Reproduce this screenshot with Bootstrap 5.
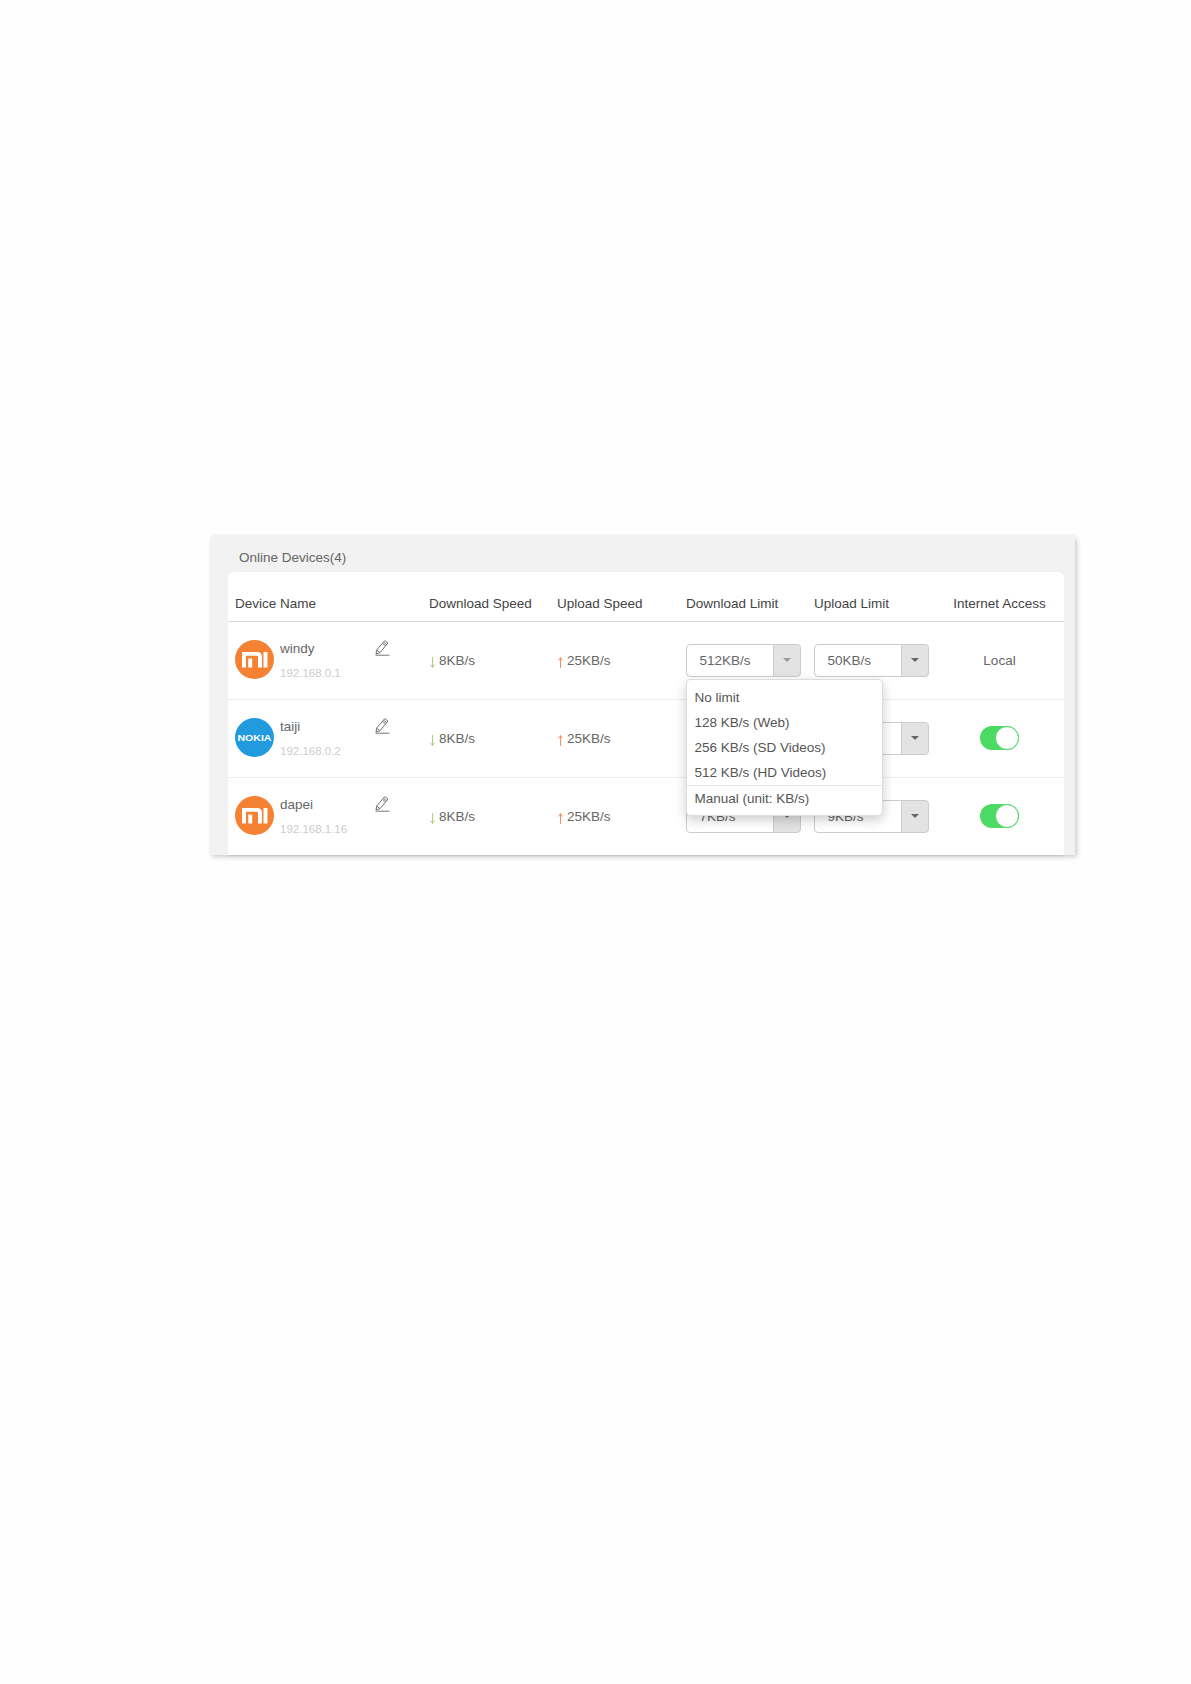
<!DOCTYPE html>
<html lang="en">
<head>
<meta charset="utf-8">
<title>Online Devices</title>
<link href="https://cdn.jsdelivr.net/npm/bootstrap@5.3.0/dist/css/bootstrap.min.css" rel="stylesheet">
<style>
body{background:#fefefe;padding:535px 116px 0 210px;font-family:"Liberation Sans",Arial,sans-serif;font-size:13.5px;color:#666;min-height:1684px}
.dev-panel{background:#f2f2f2;height:320px;padding:0 11px 0 18px;border-radius:5px 5px 0 0;box-shadow:2px 2px 5px rgba(0,0,0,.2)}
.dev-title{height:37px;padding:15px 0 0 11px;line-height:16px;color:#666;font-size:13.5px}
.dev-body{background:#fff;height:283px;border-radius:6px 6px 0 0;box-shadow:0 2px 2px -1px rgba(0,0,0,.12)}
.dev-table{table-layout:fixed;margin:0;width:836px;--bs-table-color:#666;--bs-table-bg:transparent}
.dev-table th{height:49px;padding:14px 7px 0;font-weight:400;color:#444;border-bottom:1px solid #d9d9d9;line-height:34px;font-size:13.5px;white-space:nowrap}
.dev-table td{height:78px;padding:0 7px;vertical-align:middle;border-bottom:1px solid #ececec}
.dev-table tr:last-child td{border-bottom:0}
.c-name{width:194px}
.c-dl,.c-lim,.c-lim2{width:128px}
.c-ul{width:129px}
.c-net{width:129px;text-align:center}
.dev-table th.c-net{padding:14px 0 0;text-align:center}
.dev-table td.c-speed,.dev-table td.c-local{padding-top:2px}
.dev-row{margin-bottom:1px}
.dev-avatar{width:39px;height:39px;flex:none;display:block}
.dev-info{width:94px;margin:2px 0 0 6px}
.dev-name{line-height:16px;color:#666}
.dev-ip{line-height:14px;font-size:11.5px;color:#ccc;margin-top:9px}
.dev-edit{margin:-24px 0 0 -1px;flex:none;display:block}
.speed-arrow{margin:0 4px 0 1px;vertical-align:-3px}
.sel-box{width:115px;height:33px;flex-wrap:nowrap}
.sel-box .form-control{font-size:13.5px;color:#666;padding:0 0 0 12.5px;line-height:31px;height:33px;border-color:#ccc;border-radius:4px 0 0 4px;background:#fff}
.sel-box .input-group-text{width:28px;padding:0;justify-content:center;background:#e3e3e3;border-color:#ccc;border-radius:0 4px 4px 0;height:33px}
.sel-caret{width:0;height:0;border-left:4px solid transparent;border-right:4px solid transparent;border-top:4px solid #666;display:block}
.sel-caret-dim{border-top-color:#999}
.sel-wrap{position:relative}
.sel-menu{--bs-dropdown-min-width:0;top:35px;left:0;width:197px;height:137px;padding:5px 0 0;border:1px solid #ddd;border-radius:4px;box-shadow:0 4px 12px rgba(0,0,0,.2);font-size:13.5px;z-index:5}
.sel-menu .dropdown-item{padding:0 7.5px;height:25px;line-height:25px;color:#555}
.sel-menu .dropdown-divider{margin:0;border-color:#e5e5e5;opacity:1}
.sel-menu .sel-manual{height:26px;line-height:26px}
.net-toggle{width:39px;height:24px;background:#4cd964;border-radius:12px;position:relative;display:inline-block;vertical-align:middle}
.net-knob{position:absolute;right:0;top:0;width:24px;height:24px;border-radius:50%;background:#fff;border:1px solid #4cd964}
</style>
</head>
<body>
<svg width="0" height="0" class="position-absolute">
  <defs>
    <symbol id="ico-mi" viewBox="0 0 39 39">
      <circle cx="19.5" cy="19.5" r="19.5" fill="#f58233"/>
      <path d="M7 12h15.500a4.500 4.500 0 0 1 4.500 4.500v11h-4V17a1.200 1.200 0 0 0-1.200-1.200H11v11.700H7zM13.200 18.500h4v9h-4zM28.500 12h4v15.500h-4z" fill="#fff"/>
    </symbol>
    <symbol id="ico-pen" viewBox="0 0 16 16">
      <path d="M11.200.7l3.300 2.300-8 9.700-4 1.300.6-3.900zM10 2.300l3.300 2.400M9 3.500l3.300 2.400M3.300 10.200l3.100 2.400M2.700 12.700l1 .8" fill="none" stroke="#666" stroke-width=".9" stroke-linejoin="round"/>
      <path d="M2 15.200H16" stroke="#666" stroke-width=".9"/>
    </symbol>
    <symbol id="ico-down" viewBox="0 0 5 11">
      <path d="M2.500 0v10M.4 7.500l2.100 3 2.100-3" fill="none" stroke="#a6c96a" stroke-width=".9"/>
    </symbol>
    <symbol id="ico-up" viewBox="0 0 5 11">
      <path d="M2.500 11V1M.4 3.500l2.100-3 2.100 3" fill="none" stroke="#f0874a" stroke-width=".9"/>
    </symbol>
  </defs>
</svg>
<div class="dev-panel">
  <div class="dev-title">Online Devices(4)</div>
  <div class="dev-body">
    <table class="table dev-table">
      <thead>
        <tr>
          <th class="c-name">Device Name</th>
          <th class="c-dl">Download Speed</th>
          <th class="c-ul">Upload Speed</th>
          <th class="c-lim">Download Limit</th>
          <th class="c-lim2">Upload Limit</th>
          <th class="c-net">Internet Access</th>
        </tr>
      </thead>
      <tbody>
        <tr>
          <td>
            <div class="d-flex align-items-center dev-row">
              <svg class="dev-avatar"><use href="#ico-mi"/></svg>
              <div class="dev-info"><div class="dev-name">windy</div><div class="dev-ip">192.168.0.1</div></div>
              <svg class="dev-edit" width="17" height="16"><use href="#ico-pen"/></svg>
            </div>
          </td>
          <td class="c-speed"><svg class="speed-arrow" width="5" height="11"><use href="#ico-down"/></svg>8KB/s</td>
          <td class="c-speed"><svg class="speed-arrow" width="5" height="11"><use href="#ico-up"/></svg>25KB/s</td>
          <td>
            <div class="sel-wrap">
              <div class="input-group sel-box"><span class="form-control">512KB/s</span><span class="input-group-text"><i class="sel-caret sel-caret-dim"></i></span></div>
              <div class="dropdown-menu d-block sel-menu">
                <a class="dropdown-item" href="#">No limit</a>
                <a class="dropdown-item" href="#">128 KB/s (Web)</a>
                <a class="dropdown-item" href="#">256 KB/s (SD Videos)</a>
                <a class="dropdown-item" href="#">512 KB/s (HD Videos)</a>
                <hr class="dropdown-divider">
                <a class="dropdown-item sel-manual" href="#">Manual (unit: KB/s)</a>
              </div>
            </div>
          </td>
          <td><div class="input-group sel-box"><span class="form-control">50KB/s</span><span class="input-group-text"><i class="sel-caret"></i></span></div></td>
          <td class="c-net c-local">Local</td>
        </tr>
        <tr>
          <td>
            <div class="d-flex align-items-center dev-row">
              <svg class="dev-avatar" viewBox="0 0 39 39"><circle cx="19.500" cy="19.500" r="19.500" fill="#229ade"/><text x="19.500" y="22.600" text-anchor="middle" font-family="Liberation Sans, Arial, sans-serif" font-size="9.200" font-weight="700" fill="#fff" textLength="34" lengthAdjust="spacingAndGlyphs">NOKIA</text></svg>
              <div class="dev-info"><div class="dev-name">taiji</div><div class="dev-ip">192.168.0.2</div></div>
              <svg class="dev-edit" width="17" height="16"><use href="#ico-pen"/></svg>
            </div>
          </td>
          <td class="c-speed"><svg class="speed-arrow" width="5" height="11"><use href="#ico-down"/></svg>8KB/s</td>
          <td class="c-speed"><svg class="speed-arrow" width="5" height="11"><use href="#ico-up"/></svg>25KB/s</td>
          <td><div class="input-group sel-box"><span class="form-control"></span><span class="input-group-text"><i class="sel-caret"></i></span></div></td>
          <td><div class="input-group sel-box"><span class="form-control"></span><span class="input-group-text"><i class="sel-caret"></i></span></div></td>
          <td class="c-net"><span class="net-toggle"><span class="net-knob"></span></span></td>
        </tr>
        <tr>
          <td>
            <div class="d-flex align-items-center dev-row">
              <svg class="dev-avatar"><use href="#ico-mi"/></svg>
              <div class="dev-info"><div class="dev-name">dapei</div><div class="dev-ip">192.168.1.16</div></div>
              <svg class="dev-edit" width="17" height="16"><use href="#ico-pen"/></svg>
            </div>
          </td>
          <td class="c-speed"><svg class="speed-arrow" width="5" height="11"><use href="#ico-down"/></svg>8KB/s</td>
          <td class="c-speed"><svg class="speed-arrow" width="5" height="11"><use href="#ico-up"/></svg>25KB/s</td>
          <td><div class="input-group sel-box"><span class="form-control">7KB/s</span><span class="input-group-text"><i class="sel-caret"></i></span></div></td>
          <td><div class="input-group sel-box"><span class="form-control">9KB/s</span><span class="input-group-text"><i class="sel-caret"></i></span></div></td>
          <td class="c-net"><span class="net-toggle"><span class="net-knob"></span></span></td>
        </tr>
      </tbody>
    </table>
  </div>
</div>
<script src="https://cdn.jsdelivr.net/npm/bootstrap@5.3.0/dist/js/bootstrap.bundle.min.js"></script>
</body>
</html>
